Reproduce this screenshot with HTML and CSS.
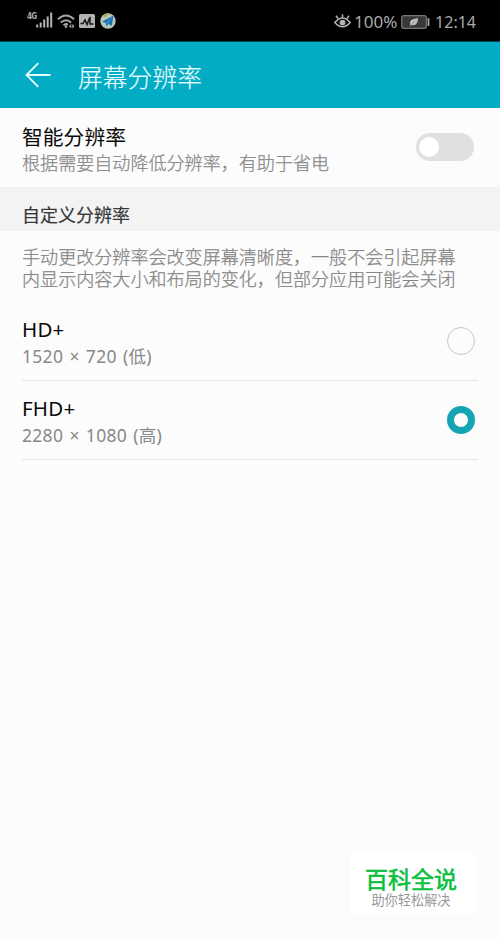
FILE: index.html
```html
<!DOCTYPE html>
<html lang="zh-CN">
<head>
<meta charset="utf-8">
<title>屏幕分辨率</title>
<link rel="stylesheet" href="styles.css">
</head>
<body>
<div class="screen">
  <header class="status">
    <div class="status-left">
      <span class="net">4G</span>
      <svg class="signal" width="17" height="16" viewBox="0 0 17 16" stroke="#b4b4b4" stroke-width="2"><path d="M1.2 15.500v-3M4.700 15.500v-5M8.200 15.500v-8M11.700 15.500v-11M15.200 15.500v-15"/></svg>
      <svg class="wifi" width="19" height="15" viewBox="0 0 19 15" fill="none" stroke="#a8a8a8" stroke-width="1.900"><path d="M1 5.200Q9 -2.200 17 5.200M3.800 8.500Q9 3.800 14.200 8.500M6.500 11.300Q9 9 10.800 10.800"/><circle cx="9" cy="12.600" r="1.300" fill="#a8a8a8" stroke="none"/><path fill="#a8a8a8" stroke="none" d="M14.300 10v4.600L12 12.300zM15.300 10v4.600l2.300-2.300z"/></svg>
      <svg class="pulse" width="16" height="14" viewBox="0 0 16 14"><rect width="16" height="14" rx="1.500" fill="#b2b2b2"/><path d="M1.500 9.500H4L6 6l2 4.500 3-7.500v7h3.500" fill="none" stroke="#151515" stroke-width="1.500"/></svg>
      <svg class="plane" width="16" height="16" viewBox="0 0 16 16"><circle cx="8" cy="8" r="7.700" fill="#b9c7b9"/><path d="M2 3A7.700 7.700 0 0 1 9 .400L6 4z" fill="#9db15c"/><path d="M2 8.800L13.500 2.500 11.800 12.800 8.500 11 6.300 13.500 5.800 10z" fill="#1870ae"/><path d="M5.800 10L13.500 2.500 8 11z" fill="#3c91c8"/></svg>
    </div>
    <div class="status-right">
      <svg class="eye" width="17" height="15" viewBox="0 0 17 15" fill="none" stroke="#b4b4b4" stroke-width="1.500"><path d="M.800 8.500Q8.500 -.500 16.200 8.500 8.500 17 .800 8.500zM8.500 3.500V.300M4 4.500L2 1.700M13 4.500l2-2.800"/><circle cx="8.500" cy="8.600" r="2.900" fill="#b4b4b4" stroke="none"/></svg>
      <span class="percent">100%</span>
      <svg class="battery" width="29" height="14" viewBox="0 0 29 14"><rect x=".700" y=".700" width="24.600" height="12.600" rx="2" fill="#383838" stroke="#777" stroke-width="1.300"/><rect x="26.600" y="3.200" width="1.800" height="7.800" fill="#aaa"/><path d="M9.300 11Q8 5.500 12 4.300L17 3Q17 10 12.500 10.200L11 10z" fill="#bdbdbd"/><path d="M9 11.300L14 6" stroke="#777" stroke-width=".500"/></svg>
      <span class="clock">12:14</span>
    </div>
  </header>
  <nav class="appbar">
    <svg class="back" width="26" height="26" viewBox="0 0 26 26" fill="none" stroke="#e4fbff" stroke-width="1.900"><path d="M13.300 1.200L1.500 13l11.800 11.800M1.500 13H25.500"/></svg>
    <h1>屏幕分辨率</h1>
  </nav>
  <section class="smart">
    <div>
      <h2>智能分辨率</h2>
      <p class="sub">根据需要自动降低分辨率，有助于省电</p>
    </div>
    <div class="switch"><i></i></div>
  </section>
  <h3 class="group">自定义分辨率</h3>
  <p class="note">手动更改分辨率会改变屏幕清晰度，一般不会引起屏幕<br>内显示内容大小和布局的变化，但部分应用可能会关闭</p>
  <ul class="options">
    <li>
      <div><div class="name">HD+</div><div class="size">1520 × 720 (低)</div></div>
      <span class="radio"></span>
    </li>
    <li>
      <div><div class="name">FHD+</div><div class="size">2280 × 1080 (高)</div></div>
      <span class="radio on"></span>
    </li>
  </ul>
  <aside class="badge"><strong>百科全说</strong><span>助你轻松解决</span></aside>
</div>
</body>
</html>
```
FILE: styles.css
```css
* { box-sizing: border-box; }
body, h1, h2, h3, p, ul { margin: 0; padding: 0; }
body {
  background: #fcfcfc;
  font-family: "Noto Sans", "Noto Sans CJK SC", sans-serif;
}
.screen {
  width: 500px;
  height: 939px;
  display: flex;
  flex-direction: column;
  overflow: hidden;
}
.status {
  height: 42px;
  flex: none;
  display: flex;
  justify-content: space-between;
  background: #000;
  border-bottom: 1px solid #04454e;
  padding: 0 24px 0 27px;
  color: #aaa;
}
.status-left, .status-right { display: flex; align-items: center; }
.status svg { flex: none; }
.net { font: bold 8px/10px "DejaVu Sans Condensed", "Noto Sans", sans-serif; letter-spacing: -.8px; width: 9px; margin-top: -7px; }
.signal { margin-top: -1px; }
.wifi { margin: 2px 0 0 4px; }
.pulse { margin: 1px 0 0 3px; }
.plane { margin-left: 5px; }
.percent, .clock { font-size: 17px; line-height: 20px; }
.clock { font-size: 16px; }
.percent { margin-left: 3px; width: 44px; }
.status-right { padding-top: 2px; }
.battery { margin: 0 5px 0 3px; }
.appbar {
  height: 66px;
  flex: none;
  display: flex;
  align-items: center;
  background: #02acc4;
  padding-left: 25px;
  color: #e4fbff;
}
.appbar h1 { margin: 1px 0 0 27px; font-size: 24.8px; line-height: 36px; font-weight: 300; font-family: "Noto Sans CJK SC", sans-serif; -webkit-text-stroke: .15px; }
.smart {
  height: 79px;
  flex: none;
  display: flex;
  justify-content: space-between;
  padding: 15px 26px 0 22px;
}
.smart h2 { font-size: 20.8px; line-height: 28px; font-weight: 400; color: #0a0a0a; }
.sub { font-size: 18.07px; line-height: 25px; color: #888; font-weight: 300; white-space: nowrap; -webkit-text-stroke: .25px; }
.switch { width: 58px; height: 28px; margin-top: 10px; padding: 4px 3px; border-radius: 14px; background: #e0e0e0; }
.switch i { display: block; width: 20px; height: 20px; border-radius: 50%; background: #fff; }
.group {
  height: 44px;
  flex: none;
  padding: 15px 22px 0;
  background: #f3f3f3;
  font-size: 18px;
  line-height: 26px;
  font-weight: 400;
  -webkit-text-stroke: .2px;
  color: #383838;
}
.note {
  padding: 16px 0 0 22px;
  height: 71px;
  flex: none;
  font-size: 18.07px;
  line-height: 21.5px;
  color: #858585;
  font-weight: 300;
  -webkit-text-stroke: .25px;
  white-space: nowrap;
}
.options { list-style: none; padding: 0 22px; }
.options li {
  height: 79px;
  display: flex;
  justify-content: space-between;
  align-items: center;
  border-bottom: 1px solid #e4e4e4;
  padding-right: 3px;
}
.name { font-size: 20.5px; line-height: 28px; color: #0a0a0a; letter-spacing: .2px; }
.size { font-size: 17.5px; line-height: 25px; color: #888; letter-spacing: .3px; word-spacing: 1.3px; margin: 1px 0 -1px; }
.radio { width: 28px; height: 28px; border: 1.5px solid #c6c6c6; border-radius: 50%; }
.radio.on { border: 7px solid #14a5b5; }
.badge {
  align-self: flex-end;
  margin: auto 25px 25px 0;
  width: 125px;
  height: 61px;
  background: #fff;
  display: flex;
  flex-direction: column;
  align-items: center;
  padding: 12px 3px 0 0;
}
.badge strong { font-size: 23px; line-height: 28px; font-weight: 400; -webkit-text-stroke: .6px; color: #0abf3c; }
.badge span { font-size: 13.2px; line-height: 15px; color: #999; }
```
